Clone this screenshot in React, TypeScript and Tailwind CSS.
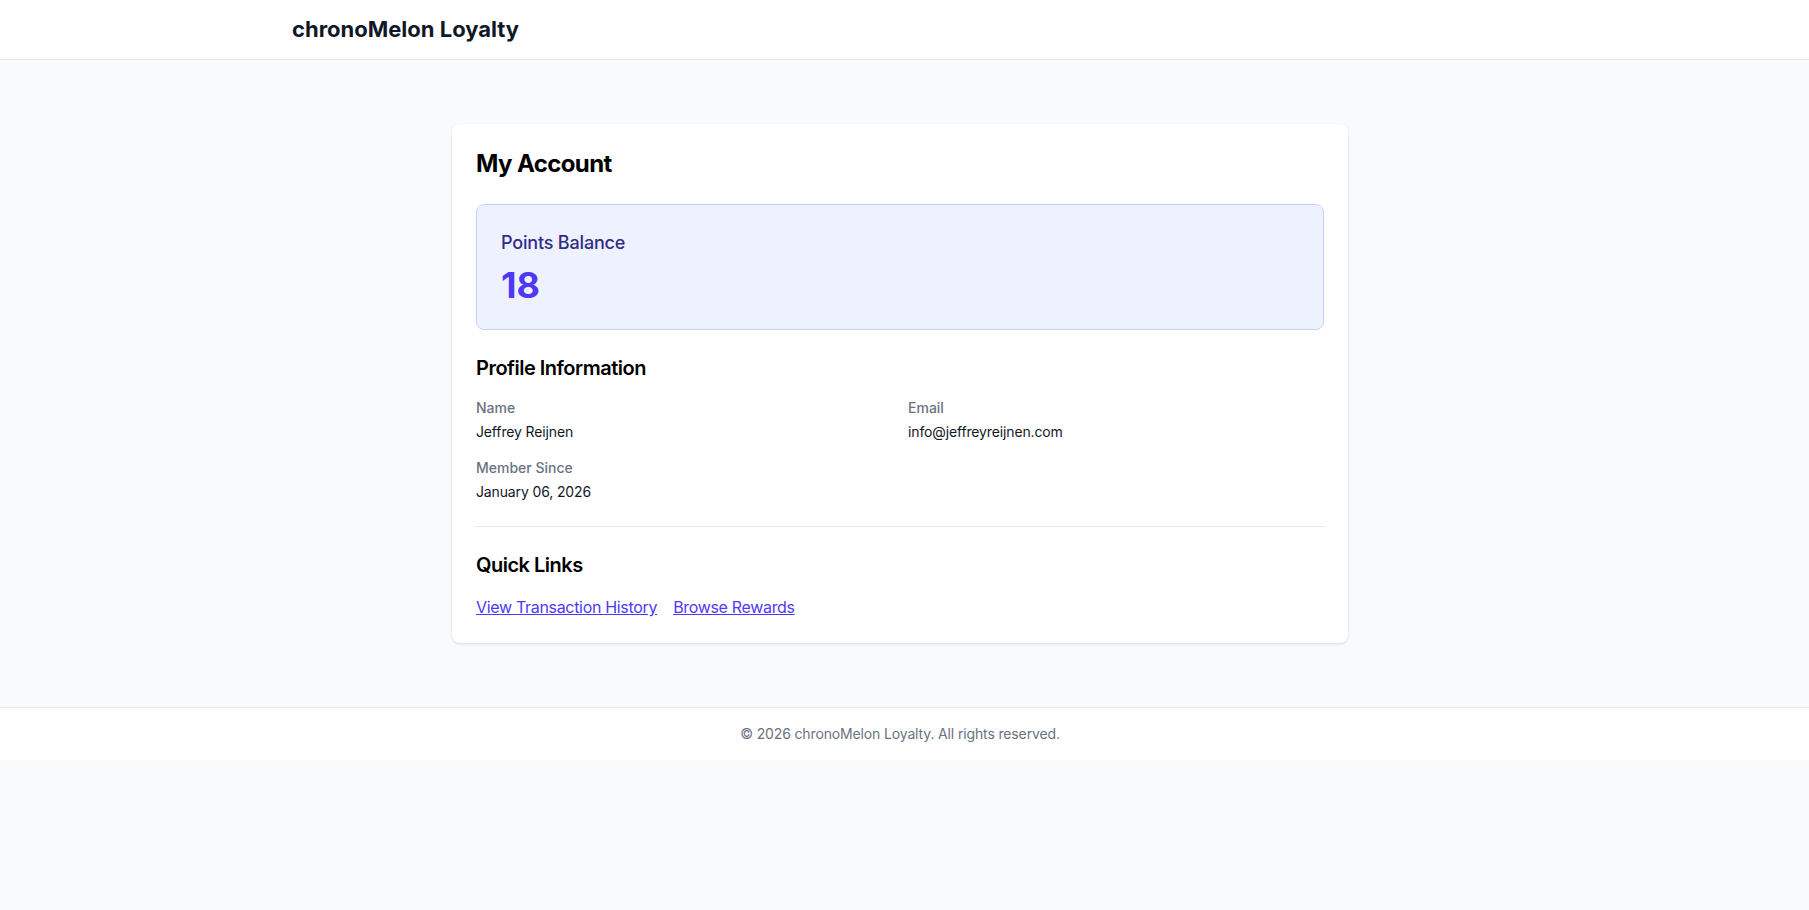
import React from "react";

const profile = [
  { label: "Name", value: "Jeffrey Reijnen" },
  { label: "Email", value: "info@jeffreyreijnen.com" },
  { label: "Member Since", value: "January 06, 2026" },
];

const App: React.FC = () => {
  return (
    <div className="min-h-screen bg-gray-50 font-['Inter',sans-serif] text-black">
      <header className="bg-white border-b border-gray-200">
        <div className="pr-[9px]">
          <div className="max-w-7xl mx-auto px-8 h-[59px] flex items-center">
            <h1 className="text-[22px] font-bold text-gray-900">chronoMelon Loyalty</h1>
          </div>
        </div>
      </header>

      <main className="py-16 pr-[9px]">
        <div className="max-w-4xl mx-auto bg-white rounded-lg shadow p-6">
          <h2 className="text-2xl font-bold tracking-tight mb-6">My Account</h2>

          <div className="bg-indigo-50 border border-indigo-200 rounded-lg p-6 mb-6">
            <p className="text-lg font-medium text-indigo-900 tracking-[-0.01em]">Points Balance</p>
            <p className="text-4xl font-bold text-indigo-600 mt-2">18</p>
          </div>

          <h3 className="text-xl font-semibold tracking-tight mb-4">Profile Information</h3>
          <div className="grid grid-cols-2 gap-4">
            {profile.map((item) => (
              <div key={item.label}>
                <p className="text-sm font-medium text-gray-500">{item.label}</p>
                <p className="text-sm text-gray-900 mt-1 tracking-[-0.01em]">{item.value}</p>
              </div>
            ))}
          </div>

          <div className="border-t border-gray-200 mt-6 pt-6">
            <h3 className="text-xl font-semibold tracking-tight mb-4">Quick Links</h3>
            <div className="flex gap-4">
              <a href="#" className="text-indigo-600 underline tracking-[-0.02em]">
                View Transaction History
              </a>
              <a href="#" className="text-indigo-600 underline tracking-[-0.02em]">
                Browse Rewards
              </a>
            </div>
          </div>
        </div>
      </main>

      <footer className="bg-white border-t border-gray-200 py-4 pr-[9px]">
        <p className="text-center text-sm text-gray-500 tracking-[-0.01em]">
          © 2026 chronoMelon Loyalty. All rights reserved.
        </p>
      </footer>
    </div>
  );
};

export default App;
